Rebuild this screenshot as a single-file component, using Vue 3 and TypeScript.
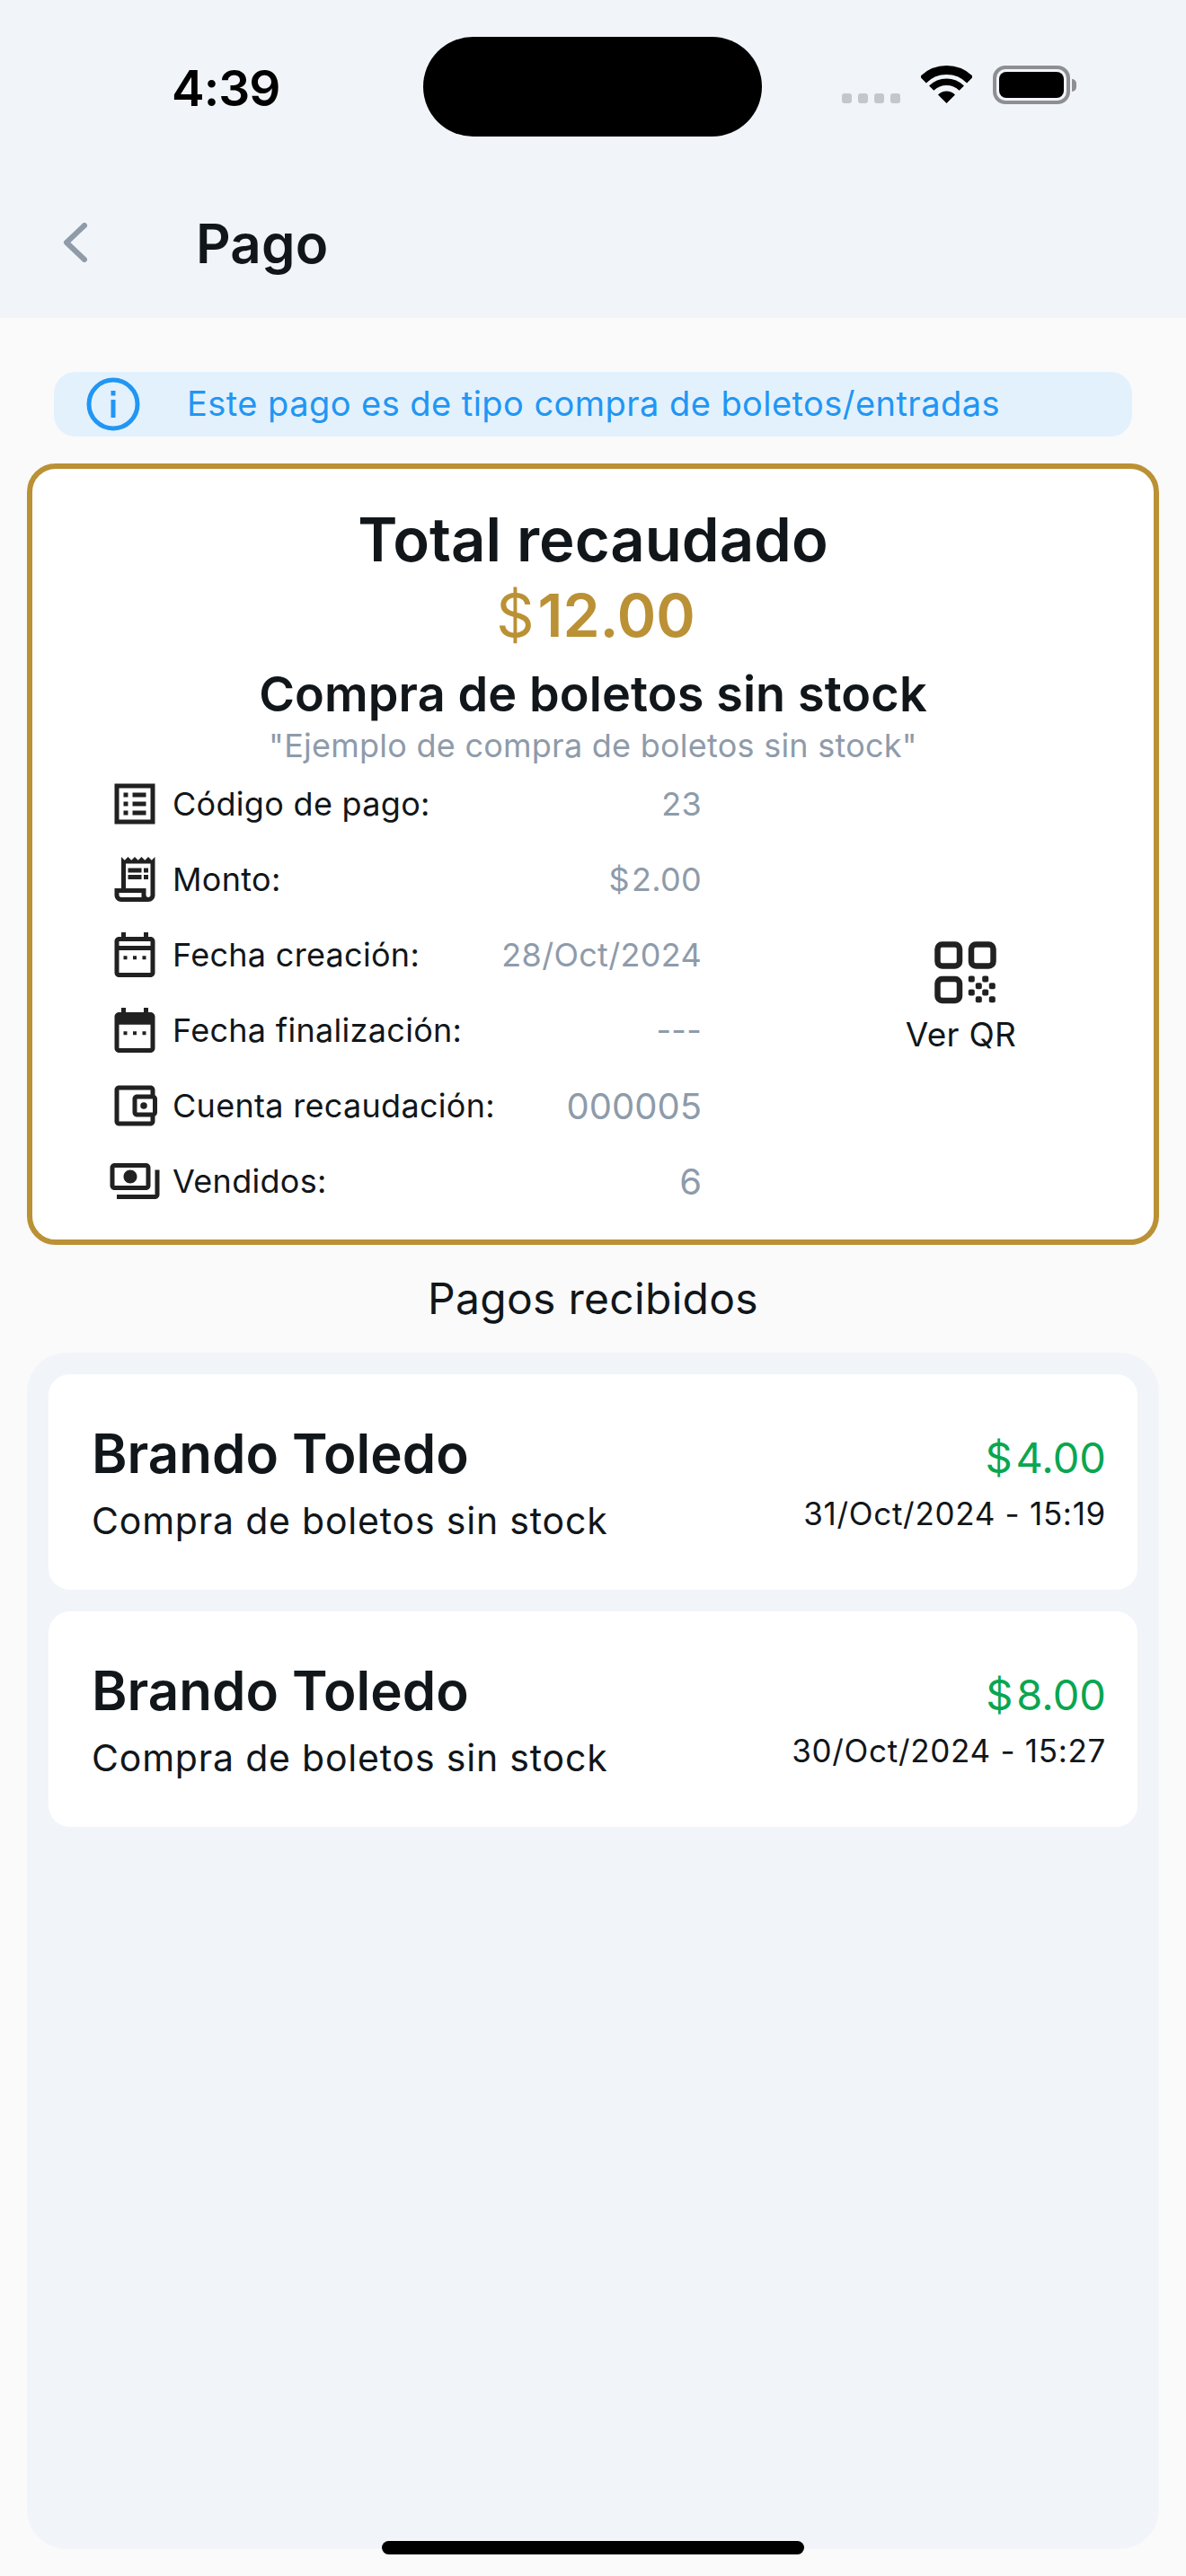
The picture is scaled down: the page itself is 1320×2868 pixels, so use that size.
<script setup lang="ts">
type Row = { label: string; value: string; icon: string[]; big?: boolean; money?: boolean };

const calendarDots = "M7 12.5h1.6v1.6H7zm4.2 0h1.6v1.6h-1.6zm4.2 0H17v1.6h-1.6z";

const rows: Row[] = [
  {
    label: "Código de pago:",
    value: "23",
    icon: ["M3 3v18h18V3H3zm16 16H5V5h14v14zM11 7h6v2h-6zm0 4h6v2h-6zm0 4h6v2h-6zM7 7h2v2H7zm0 4h2v2H7zm0 4h2v2H7z"],
  },
  {
    label: "Monto:",
    value: "2.00",
    money: true,
    icon: [
      "M19.5 3.5L18 2l-1.5 1.5L15 2l-1.5 1.5L12 2l-1.5 1.5L9 2 7.5 3.5 6 2v14H3v3c0 1.66 1.34 3 3 3h12c1.66 0 3-1.34 3-3V2l-1.5 1.5zM15 20H6c-.55 0-1-.45-1-1v-1h10v2zm4-1c0 .55-.45 1-1 1s-1-.45-1-1v-3H8V5h11v14z",
      "M9 7h6v2H9zm7 0h2v2h-2zM9 10h6v2H9zm7 0h2v2h-2z",
    ],
  },
  {
    label: "Fecha creación:",
    value: "28/Oct/2024",
    icon: [
      "M19 4h-1V2h-2v2H8V2H6v2H5c-1.1 0-2 .9-2 2v14c0 1.1.9 2 2 2h14c1.1 0 2-.9 2-2V6c0-1.1-.9-2-2-2zm0 16H5V10h14v10zm0-12H5V6h14v2z",
      calendarDots,
    ],
  },
  {
    label: "Fecha finalización:",
    value: "---",
    icon: [
      "M19 4h-1V2h-2v2H8V2H6v2H5c-1.1 0-2 .9-2 2v14c0 1.1.9 2 2 2h14c1.1 0 2-.9 2-2V6c0-1.1-.9-2-2-2zm0 16H5V9.5h14V20z",
      calendarDots,
    ],
  },
  {
    label: "Cuenta recaudación:",
    value: "000005",
    big: true,
    icon: [
      "M21 7.28V5c0-1.1-.9-2-2-2H5c-1.11 0-2 .9-2 2v14c0 1.1.89 2 2 2h14c1.1 0 2-.9 2-2v-2.28c.59-.35 1-.98 1-1.72V9c0-.74-.41-1.38-1-1.72zM20 9v6h-7V9h7zM5 19V5h14v2h-6c-1.1 0-2 .9-2 2v6c0 1.1.9 2 2 2h6v2H5z",
      "M16 10.5a1.5 1.5 0 1 0 0 3 1.5 1.5 0 0 0 0-3z",
    ],
  },
  {
    label: "Vendidos:",
    value: "6",
    big: true,
    icon: [
      "M19 14V6c0-1.1-.9-2-2-2H3c-1.1 0-2 .9-2 2v8c0 1.1.9 2 2 2h14c1.1 0 2-.9 2-2zm-2 0H3V6h14v8zm-7-7c-1.66 0-3 1.34-3 3s1.34 3 3 3 3-1.34 3-3-1.34-3-3-3zm13 0v11c0 1.1-.9 2-2 2H4v-2h17V7h2z",
    ],
  },
];

const payments = [
  { name: "Brando Toledo", concept: "Compra de boletos sin stock", amount: "4.00", date: "31/Oct/2024 - 15:19" },
  { name: "Brando Toledo", concept: "Compra de boletos sin stock", amount: "8.00", date: "30/Oct/2024 - 15:27" },
];

const qrDots: [number, number][] = [
  [41.3, 42], [56.7, 42],
  [49.3, 49.7], [64.3, 49.7],
  [41.3, 57], [56.7, 57],
  [49.3, 64.7], [64.3, 64.7],
];
</script>

<template>
  <div class="page">
    <header class="top">
      <div class="status">
        <span class="clock">4:39</span>
        <div class="island"></div>
        <div class="status-right">
          <div class="signal"><i></i><i></i><i></i><i></i></div>
          <svg class="wifi" width="57" height="42" viewBox="0 0 57 42">
            <path d="M2.34 15.84A37 37 0 0 1 54.66 15.84" fill="none" stroke="#000" stroke-width="10" />
            <path d="M11.7 25.2A23.75 23.75 0 0 1 45.3 25.2" fill="none" stroke="#000" stroke-width="7.5" />
            <path d="M28.5 42L19 32.5A13.5 13.5 0 0 1 38 32.5z" fill="#000" />
          </svg>
          <div class="battery"><div class="battery-fill"></div></div>
          <div class="battery-cap"></div>
        </div>
      </div>
      <div class="titlebar">
        <svg class="back" width="27" height="44" viewBox="0 0 27 44">
          <path d="M24 3L4 22l20 19" fill="none" stroke="#8f9ba8" stroke-width="6" stroke-linecap="round" stroke-linejoin="round" />
        </svg>
        <h1 class="title">Pago</h1>
      </div>
    </header>

    <div class="notice">
      <svg width="60" height="60" viewBox="0 0 60 60">
        <circle cx="30" cy="30" r="27" fill="none" stroke="#2196f3" stroke-width="5" />
        <rect x="27.5" y="25" width="5" height="20" fill="#2196f3" />
        <rect x="27.5" y="15" width="5" height="5.5" fill="#2196f3" />
      </svg>
      <span class="notice-text">Este pago es de tipo compra de boletos/entradas</span>
    </div>

    <section class="summary">
      <div class="total-label">Total recaudado</div>
      <div class="total-value"><span class="cur">$</span>12.00</div>
      <div class="event-name">Compra de boletos sin stock</div>
      <div class="event-desc">"Ejemplo de compra de boletos sin stock"</div>

      <div class="details">
        <div class="rows">
          <div v-for="r in rows" :key="r.label" class="row">
            <svg class="row-icon" width="60" height="60" viewBox="0 0 24 24">
              <path v-for="d in r.icon" :key="d" :d="d" fill="#212121" />
            </svg>
            <span class="row-label">{{ r.label }}</span>
            <span class="row-value" :class="{ big: r.big }">
              <span v-if="r.money" class="cur small">$</span>{{ r.value }}
            </span>
          </div>
        </div>
        <div class="qr">
          <svg class="qr-icon" width="70" height="70" viewBox="0 0 70 70">
            <g fill="none" stroke="#212121" stroke-width="6.5">
              <rect x="3.5" y="3.5" width="24.5" height="24" rx="5" />
              <rect x="41" y="3.5" width="24.5" height="24" rx="5" />
              <rect x="3.5" y="42" width="24.5" height="24" rx="5" />
            </g>
            <rect v-for="(p, i) in qrDots" :key="i" :x="p[0] - 3.5" :y="p[1] - 3.5" width="7" height="7" rx="2" fill="#212121" />
          </svg>
          <span class="qr-label">Ver QR</span>
        </div>
      </div>
    </section>

    <h2 class="received">Pagos recibidos</h2>

    <section class="panel">
      <div v-for="p in payments" :key="p.date" class="pay">
        <div class="pay-left">
          <div class="pay-name">{{ p.name }}</div>
          <div class="pay-concept">{{ p.concept }}</div>
        </div>
        <div class="pay-right">
          <div class="pay-amount"><span class="cur">$</span>{{ p.amount }}</div>
          <div class="pay-date">{{ p.date }}</div>
        </div>
      </div>
    </section>

    <div class="home"></div>
  </div>
</template>

<style scoped>
.page {
  position: relative;
  height: 2868px;
  display: flex;
  flex-direction: column;
  padding-bottom: 30px;
  box-sizing: border-box;
  overflow: hidden;
  background: #fafafa;
  color: #11161a;
  font-family: "Inter", "Noto Sans", sans-serif;
}
.top {
  height: 354px;
  background: #f1f5f9;
  flex-shrink: 0;
}
.status {
  display: flex;
  align-items: flex-start;
  height: 152px;
  padding-top: 41px;
  box-sizing: border-box;
}
.clock {
  width: 85px;
  padding-left: 191px;
  margin-top: 24px;
  margin-right: 195px;
  font-size: 55px;
  line-height: 66px;
  font-weight: 600;
  color: #000;
  letter-spacing: -1px;
}
.island {
  width: 377px;
  height: 111px;
  border-radius: 56px;
  background: #000;
  flex-shrink: 0;
}
.status-right {
  display: flex;
  align-items: flex-end;
  margin-left: 89px;
  margin-top: 32px;
  height: 43px;
}
.signal {
  display: flex;
  gap: 7px;
  margin-bottom: 1px;
}
.signal i {
  width: 11px;
  height: 11px;
  border-radius: 3px;
  background: #c4c6c9;
}
.wifi {
  margin-left: 23px;
  margin-bottom: 1px;
}
.battery {
  width: 86px;
  height: 43px;
  margin-left: 23px;
  padding: 3px;
  box-sizing: border-box;
  border: 4px solid #8e8e93;
  border-radius: 14px;
}
.battery-fill {
  width: 100%;
  height: 100%;
  background: #000;
  border-radius: 8px;
}
.battery-cap {
  width: 5px;
  height: 14px;
  margin-left: 2px;
  margin-bottom: 14px;
  background: #8e8e93;
  border-radius: 0 5px 5px 0;
}
.titlebar {
  display: flex;
  align-items: center;
  padding: 95px 0 0 70px;
}
.title {
  margin: 2px 0 0 121px;
  font-size: 60px;
  line-height: 44px;
  font-weight: 600;
  letter-spacing: 0.2px;
}
.notice {
  display: flex;
  align-items: center;
  gap: 52px;
  height: 72px;
  margin: 60px 60px 0;
  padding-left: 36px;
  flex-shrink: 0;
  background: #e3f1fd;
  border-radius: 24px;
  color: #2196f3;
  font-size: 38px;
  font-weight: 400;
  letter-spacing: 0.45px;
}
.notice-text {
  margin-top: -2px;
}
.summary {
  height: 870px;
  margin: 30px 30px 0;
  padding-top: 43px;
  box-sizing: border-box;
  flex-shrink: 0;
  background: #fff;
  border: 6px solid #bb9135;
  border-radius: 32px;
  text-align: center;
}
.total-label {
  font-size: 67px;
  line-height: 72px;
  font-weight: 600;
}
.total-value {
  margin-top: 10px;
  font-size: 66px;
  line-height: 76px;
  font-weight: 600;
  color: #bb9135;
  padding-left: 6px;
}
.cur {
  font-weight: 400;
  margin-right: 4px;
}
.cur.small {
  margin-right: 2px;
}
.event-name {
  margin-top: 17px;
  font-size: 54px;
  line-height: 66px;
  font-weight: 600;
  letter-spacing: 0.1px;
}
.event-desc {
  font-size: 36px;
  line-height: 48px;
  color: #8e9baa;
  letter-spacing: 0.25px;
}
.details {
  display: flex;
  align-items: center;
  margin-top: -1px;
  padding-left: 84px;
}
.rows {
  width: 661px;
  flex-shrink: 0;
}
.row {
  display: flex;
  align-items: center;
  height: 84px;
}
.row-icon {
  flex-shrink: 0;
}
.row-label {
  margin-left: 12px;
  font-size: 36px;
  letter-spacing: 0.3px;
}
.row-value {
  margin-left: auto;
  font-size: 36px;
  color: #8e9baa;
  letter-spacing: 0.3px;
}
.row-value.big {
  font-size: 40px;
  letter-spacing: 0;
}
.qr {
  display: flex;
  flex-direction: column;
  align-items: center;
  flex: 1;
  padding-left: 70px;
  padding-top: 8px;
  margin-left: 8px;
  gap: 11px;
  font-size: 37px;
  letter-spacing: 0.3px;
}
.qr-icon {
  margin-left: 6px;
  margin-top: 3px;
}
.qr-label {
  margin-right: 4px;
}
.received {
  margin: 32px 0 0;
  height: 88px;
  flex-shrink: 0;
  font-size: 48px;
  line-height: 56px;
  font-weight: 400;
  letter-spacing: 0.3px;
  text-align: center;
}
.panel {
  flex: 1;
  display: flex;
  flex-direction: column;
  gap: 24px;
  margin: 0 30px;
  padding: 24px;
  background: #f1f5fa;
  border-radius: 44px;
}
.pay {
  display: flex;
  justify-content: space-between;
  align-items: center;
  height: 240px;
  padding: 0 35px 0 48px;
  box-sizing: border-box;
  background: #fff;
  border-radius: 24px;
}
.pay-name {
  font-size: 60px;
  line-height: 70px;
  font-weight: 600;
}
.pay-concept {
  margin-top: 15px;
  font-size: 41px;
  line-height: 50px;
  letter-spacing: 0.8px;
}
.pay-right {
  text-align: right;
}
.pay-amount {
  font-size: 47px;
  line-height: 60px;
  color: #0aa650;
}
.pay-date {
  margin-top: 10px;
  font-size: 35px;
  line-height: 44px;
  letter-spacing: 0.7px;
}
.home {
  position: absolute;
  left: 425px;
  top: 2829px;
  width: 470px;
  height: 15px;
  border-radius: 8px;
  background: #000;
}
</style>

<style>
body {
  background: #fafafa;
}
</style>
